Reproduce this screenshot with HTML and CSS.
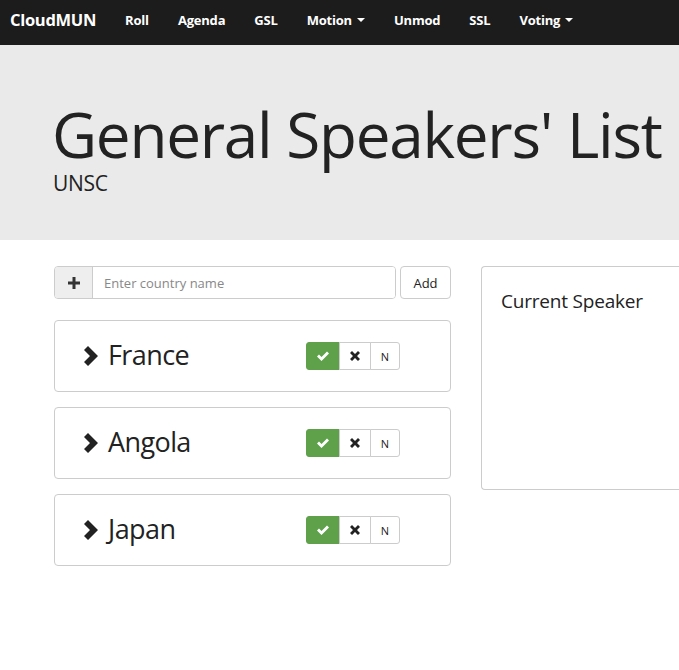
FILE: index.html
```html
<!DOCTYPE html>
<html>
<head>
<meta charset="utf-8">
<link rel="stylesheet" href="styles.css">
</head>
<body>
<nav class="navbar">
  <a class="brand">CloudMUN</a>
  <ul class="nav">
    <li>Roll</li>
    <li>Agenda</li>
    <li>GSL</li>
    <li>Motion <span class="caret"></span></li>
    <li>Unmod</li>
    <li>SSL</li>
    <li>Voting <span class="caret"></span></li>
  </ul>
</nav>
<header class="jumbotron">
  <h1 class="title">General Speakers' List</h1>
  <p class="subtitle">UNSC</p>
</header>
<main class="content">
  <section class="left">
    <div class="input-row">
      <div class="input-group">
        <span class="addon"><svg width="12" height="12" viewBox="0 0 12 12"><path d="M4.5 0h3v4.5H12v3H7.5V12h-3V7.5H0v-3h4.5z" fill="#333"/></svg></span>
        <input class="field" type="text" placeholder="Enter country name">
      </div>
      <button class="btn-add">Add</button>
    </div>
    <div class="card">
      <div class="country"><svg class="chev" width="16" height="20" viewBox="0 0 16 20"><path d="M1 4 5 0 15 10 5 20 1 16 7 10z" fill="#222"/></svg><span>France</span></div>
      <div class="btn-group">
        <span class="b b-yes"><svg width="12" height="10" viewBox="0 0 12 10"><path d="M0 5.5 2 3.5 4.5 6 10 0.5 12 2.5 4.5 10z" fill="#fff"/></svg></span>
        <span class="b"><svg width="10" height="10" viewBox="0 0 10 10"><path d="M0 2 2 0 5 3 8 0 10 2 7 5 10 8 8 10 5 7 2 10 0 8 3 5z" fill="#222"/></svg></span>
        <span class="b b-n">N</span>
      </div>
    </div>
    <div class="card">
      <div class="country"><svg class="chev" width="16" height="20" viewBox="0 0 16 20"><path d="M1 4 5 0 15 10 5 20 1 16 7 10z" fill="#222"/></svg><span>Angola</span></div>
      <div class="btn-group">
        <span class="b b-yes"><svg width="12" height="10" viewBox="0 0 12 10"><path d="M0 5.5 2 3.5 4.5 6 10 0.5 12 2.5 4.5 10z" fill="#fff"/></svg></span>
        <span class="b"><svg width="10" height="10" viewBox="0 0 10 10"><path d="M0 2 2 0 5 3 8 0 10 2 7 5 10 8 8 10 5 7 2 10 0 8 3 5z" fill="#222"/></svg></span>
        <span class="b b-n">N</span>
      </div>
    </div>
    <div class="card">
      <div class="country"><svg class="chev" width="16" height="20" viewBox="0 0 16 20"><path d="M1 4 5 0 15 10 5 20 1 16 7 10z" fill="#222"/></svg><span>Japan</span></div>
      <div class="btn-group">
        <span class="b b-yes"><svg width="12" height="10" viewBox="0 0 12 10"><path d="M0 5.5 2 3.5 4.5 6 10 0.5 12 2.5 4.5 10z" fill="#fff"/></svg></span>
        <span class="b"><svg width="10" height="10" viewBox="0 0 10 10"><path d="M0 2 2 0 5 3 8 0 10 2 7 5 10 8 8 10 5 7 2 10 0 8 3 5z" fill="#222"/></svg></span>
        <span class="b b-n">N</span>
      </div>
    </div>
  </section>
  <section class="right">
    <div class="panel">
      <h3 class="panel-title">Current Speaker</h3>
    </div>
  </section>
</main>
</body>
</html>
```
FILE: styles.css
```css
* { box-sizing: border-box; }
html, body { margin: 0; padding: 0; background: #fff; overflow: hidden; }
body { font-family: "Open Sans", "Noto Sans", sans-serif; color: #222; width: 679px; }

.navbar {
  height: 45px;
  background: #1c1c1c;
  display: flex;
  align-items: center;
  padding: 0 0 6px 10px;
}
.brand {
  color: #fff;
  font-weight: 700;
  font-size: 16.5px;
  letter-spacing: -0.3px;
  margin-right: 29px;
}
.nav {
  list-style: none;
  margin: 0;
  padding: 0;
  display: flex;
}
.nav li {
  color: #fff;
  font-weight: 700;
  font-size: 13px;
  letter-spacing: -0.2px;
  margin-right: 29px;
  display: flex;
  align-items: center;
}
.caret {
  display: inline-block;
  width: 0; height: 0;
  border-left: 4px solid transparent;
  border-right: 4px solid transparent;
  border-top: 4px solid #fff;
  margin-left: 5px;
}

.jumbotron {
  background: #eaeaea;
  height: 195px;
  padding: 52px 0 0 52px;
}
.title {
  margin: 0;
  font-weight: 400;
  font-size: 62px;
  line-height: 74px;
  letter-spacing: -1.25px;
  color: #222;
  white-space: nowrap;
}
.subtitle {
  margin: 0 0 0 1px;
  font-size: 21px;
  line-height: 24px;
  letter-spacing: -0.3px;
  color: #222;
}

.content {
  display: flex;
  gap: 30px;
  padding: 26px 0 0 54px;
}
.left { width: 397px; flex: none; display: flex; flex-direction: column; gap: 15px; }
.right { flex: 1; min-width: 0; }

.input-row { display: flex; gap: 4px; margin-bottom: 6px; }
.input-group {
  display: flex;
  width: 342px;
  height: 33px;
  border: 1px solid #ccc;
  border-radius: 4px;
  overflow: hidden;
}
.addon {
  width: 38px;
  background: #eee;
  border-right: 1px solid #ccc;
  display: flex;
  align-items: center;
  justify-content: center;
}
.field {
  flex: 1;
  border: 0;
  outline: none;
  padding: 0 11px;
  font-family: "Open Sans", sans-serif;
  font-size: 13px;
  color: #555;
}
.field::placeholder { color: #888; }
.btn-add {
  width: 51px;
  height: 33px;
  border: 1px solid #ccc;
  border-radius: 4px;
  background: #fff;
  font-family: "Open Sans", sans-serif;
  font-size: 13px;
  color: #222;
  padding: 0;
}

.card {
  height: 72px;
  border: 1px solid #ccc;
  border-radius: 4px;
  display: flex;
  align-items: center;
  padding: 0 50px 0 28px;
  justify-content: space-between;
}
.country { display: flex; align-items: center; gap: 9px; font-size: 27px; letter-spacing: -0.6px; color: #222; }
.country span { margin-top: -3px; }
.chev { flex: none; }
.btn-group { display: flex; height: 28px; }
.b {
  width: 32px;
  display: flex;
  align-items: center;
  justify-content: center;
  border: 1px solid #ccc;
  margin-left: -1px;
  background: #fff;
  font-size: 11px;
  color: #222;
}
.b-yes { width: 34px; margin-left: 0; background: #5ea14a; border-color: #5ea14a; border-radius: 3px 0 0 3px; }
.b-n { width: 30px; border-radius: 0 3px 3px 0; }

.panel {
  height: 224px;
  border: 1px solid #ccc;
  border-right: 0;
  border-radius: 4px 0 0 4px;
  padding: 21px 19px;
}
.panel-title {
  margin: 0;
  font-weight: 400;
  font-size: 19px;
  letter-spacing: -0.2px;
  color: #222;
}
```
